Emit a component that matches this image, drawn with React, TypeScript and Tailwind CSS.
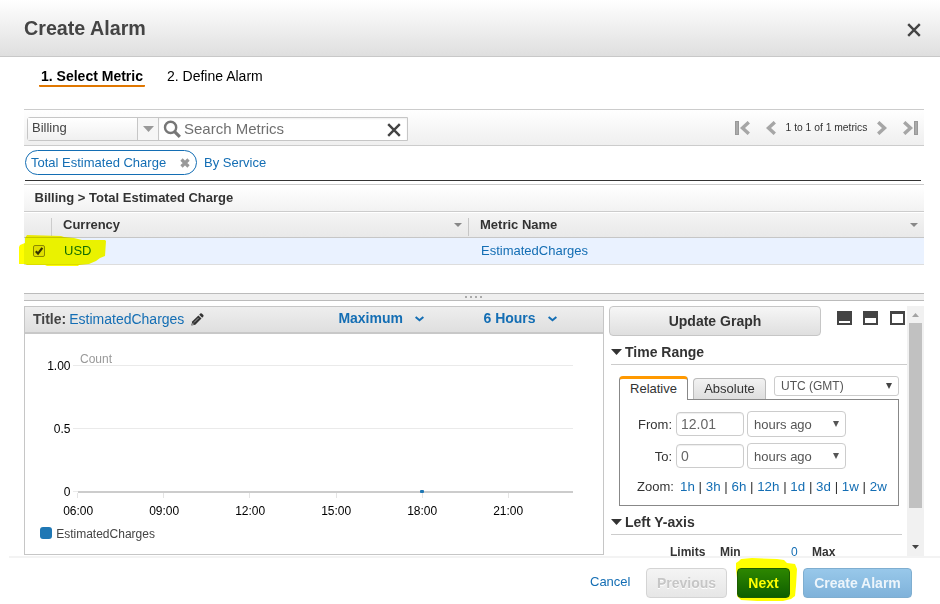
import React from 'react';

function Caret({ w = 10, h = 6, fill = '#888' }: { w?: number; h?: number; fill?: string }) {
  return (
    <svg width={w} height={h} viewBox="0 0 10 6" preserveAspectRatio="none" className="block shrink-0">
      <path d="M0 0H10L5 6Z" fill={fill} />
    </svg>
  );
}

function Cross({ size = 14 }: { size?: number }) {
  return (
    <svg width={size} height={size} viewBox="0 0 14 14" className="block shrink-0">
      <path d="M1.2 1.2L12.8 12.8M12.8 1.2L1.2 12.8" stroke="#444" strokeWidth="2.4" />
    </svg>
  );
}

function Pager({ bar, flip }: { bar?: boolean; flip?: boolean }) {
  return (
    <svg
      width={bar ? 15 : 10}
      height="14"
      viewBox={bar ? '0 0 15 14' : '5 0 10 14'}
      className={flip ? 'block -scale-x-100' : 'block'}
    >
      {bar && <rect x="0.5" y="0.5" width="3" height="13" fill="#aaa" stroke="#999" />}
      <path d="M13.8 1.2L7.5 7L13.8 12.8" fill="none" stroke="#a6a6a6" strokeWidth="3.4" />
    </svg>
  );
}

function Chevron() {
  return (
    <svg width="9" height="6" viewBox="0 0 9 6" className="mb-[2px] block">
      <path d="M0.6 1L4.5 4.3L8.4 1" fill="none" stroke="#146eb4" strokeWidth="2" />
    </svg>
  );
}

function Pencil() {
  return (
    <svg width="13" height="13" viewBox="0 0 13 13" className="block">
      <path d="M0.3 12.6L1.2 8.6L7.4 2.4L10.5 5.5L4.3 11.7Z" fill="#333" />
      <path d="M8.2 1.7L9.3 0.6Q10 0 10.8 0.6L12.3 2.1Q13 2.9 12.3 3.6L11.2 4.7Z" fill="#333" />
      <path d="M3 9.5L7.6 4.9" stroke="#bbb" strokeWidth="0.8" />
      <rect x="1" y="10.6" width="1.6" height="1" fill="#ddd" />
    </svg>
  );
}

function Chart() {
  const ticks = ['06:00', '09:00', '12:00', '15:00', '18:00', '21:00'];
  return (
    <svg width="578" height="220" viewBox="25 334 578 220" className="block text-[12px]">
      <path d="M73 365.5H573M73 428.5H573M73 491.5H78" stroke="#eaeaea" />
      <text x="70.5" y="370" textAnchor="end">1.00</text>
      <text x="70.5" y="433" textAnchor="end">0.5</text>
      <text x="70.5" y="496" textAnchor="end">0</text>
      <text x="80" y="363" fill="#999">Count</text>
      {ticks.map((t, i) => (
        <g key={t}>
          <path d={`M${77.5 + Math.round(i * 86.2)} 493V498`} stroke="#e4e4e4" />
          <text x={78.2 + i * 86} y="515" textAnchor="middle">{t}</text>
        </g>
      ))}
      <rect x="78" y="491" width="495" height="2" fill="#ccc" />
      <rect x="420" y="490" width="4" height="3" rx="1" fill="#1f77b4" />
      <rect x="40" y="527" width="12" height="12" rx="3" fill="#1f77b4" />
      <text x="56.2" y="538" fill="#444">EstimatedCharges</text>
    </svg>
  );
}

function Section({ title, width }: { title: string; width: string }) {
  return (
    <div className={`ml-[2px] flex h-[25px] items-center border-b border-[#ccc] text-[14px] font-bold ${width}`}>
      <Caret w={11} h={6} fill="#333" />
      <span className="ml-[3px]">{title}</span>
    </div>
  );
}

function RangeRow({ label, value }: { label: string; value: string }) {
  return (
    <div className="flex h-[26px] items-center">
      <span className="mt-px w-[52px] text-right">{label}</span>
      <div className="ml-[4px] flex h-[24px] w-[68px] items-center rounded-[4px] border border-[#ccc] pl-[4px] text-[14px] text-[#666] shadow-[inset_0_1px_1px_#eee]">
        {value}
      </div>
      <div className="ml-[3px] flex h-[26px] w-[99px] items-center justify-between rounded-[4px] border border-[#ccc] pr-[6px] pl-[6px] text-[#555]">
        <span className="mt-px">hours ago</span>
        <Caret w={6} h={6} fill="#555" />
      </div>
    </div>
  );
}

function Side() {
  const zooms = ['1h', '3h', '6h', '12h', '1d', '3d', '1w', '2w'];
  return (
    <div className="ml-[5px] flex h-[250px] w-[315px] overflow-hidden">
      <div className="w-[298px] shrink-0 text-[13px]">
        <div className="flex h-[33px]">
          <div className="flex h-[30px] w-[212px] items-center justify-center rounded-[4px] border border-[#c6c6c6] bg-linear-to-b from-[#f6f6f6] to-[#dfdfdf] text-[14px] font-bold">
            Update Graph
          </div>
          <svg width="69" height="14" viewBox="0 0 69 14" className="mt-[5px] ml-[16px] block">
            <rect width="15" height="14" fill="#444" />
            <rect x="2" y="10" width="11" height="2" fill="#fff" />
            <rect x="26" width="15" height="14" fill="#444" />
            <rect x="28" y="7" width="11" height="5" fill="#fff" />
            <rect x="53" width="15" height="14" fill="#444" />
            <rect x="55" y="3" width="11" height="9" fill="#fff" />
          </svg>
        </div>
        <div className="pt-px">
          <Section title="Time Range" width="w-[296px]" />
        </div>
        <div className="mt-[11px] ml-[10px] flex h-[23px] items-end">
          <div className="z-10 -mb-px flex h-[24px] w-[69px] items-center justify-center rounded-t-[4px] border-x border-t-[3px] border-x-[#888] border-t-[#f90] bg-white pb-[2px]">
            Relative
          </div>
          <div className="ml-[5px] flex h-[21px] w-[73px] items-center justify-center rounded-t-[4px] border border-b-0 border-[#bbb] bg-linear-to-b from-[#f2f2f2] to-[#dedede]">
            Absolute
          </div>
          <div className="ml-[8px] flex h-[20px] w-[125px] items-center justify-between self-start rounded-[3px] border border-[#ccc] pr-[6px] pl-[6px] text-[12px] text-[#555]">
            <span>UTC (GMT)</span>
            <Caret w={6} h={6} fill="#444" />
          </div>
        </div>
        <div className="ml-[10px] h-[107px] w-[280px] border border-[#888] pt-[11px]">
          <RangeRow label="From:" value="12.01" />
          <div className="h-[6px]" />
          <RangeRow label="To:" value="0" />
          <div className="mt-[9px] flex h-[17px] items-center whitespace-pre">
            <span className="ml-[17px] w-[43px]">Zoom:</span>
            <span className="text-[13.35px]">
              {zooms.map((z, i) => (
                <React.Fragment key={z}>
                  {i > 0 && ' | '}
                  <span className="text-[#146eb4]">{z}</span>
                </React.Fragment>
              ))}
            </span>
          </div>
        </div>
        <div className="pt-[4px]">
          <Section title="Left Y-axis" width="w-[291px]" />
        </div>
        <div className="mt-[9px] ml-[61px] flex h-[16px] items-center text-[12px] font-bold">
          <span className="w-[50px]">Limits</span>
          <span className="w-[71px]">Min</span>
          <span className="w-[21px] font-normal text-[#146eb4]">0</span>
          <span>Max</span>
        </div>
      </div>
      <div className="flex w-[17px] flex-col items-center bg-[#f1f1f1]">
        <div className="flex h-[17px] w-full items-center justify-center pr-[1px]">
          <svg width="7" height="4" viewBox="0 0 7 4"><path d="M0 4L3.5 0L7 4Z" fill="#a3a3a3" /></svg>
        </div>
        <div className="h-[185px] w-[13px] bg-[#c1c1c1]" />
        <div className="mt-[37px] mr-[1px]"><Caret w={7} h={4} fill="#444" /></div>
      </div>
    </div>
  );
}

export default function App() {
  return (
    <div className="relative flex h-[604px] w-[940px] flex-col overflow-hidden bg-white font-['Liberation_Sans',Arial,sans-serif] text-[13px] text-[#333]">
      <header className="flex h-[57px] items-center justify-between border-b border-[#c8c8c8] bg-linear-to-b from-white to-[#dfdfdf] pr-[19px] pl-[24px]">
        <h1 className="mt-[2px] text-[19.7px] font-bold text-[#444]">Create Alarm</h1>
        <div className="mt-[3px]"><Cross /></div>
      </header>

      <nav className="flex h-[52px] items-start pt-[11px] pl-[39px] text-[14px] leading-[17px] text-black">
        <div className="h-[19px] w-[106px] rounded-b-[1px] border-b-2 border-[#e07700] text-center font-bold">1. Select Metric</div>
        <div className="ml-[22px]">2. Define Alarm</div>
      </nav>

      <div className="mr-[16px] ml-[24px] flex h-[37px] w-[900px] items-center border-y border-[#ccc] bg-linear-to-b from-white to-[#efefef]">
        <div className="mt-[2px] ml-[3px] flex h-[24px] rounded-l-[3px] border border-[#c6c6c6]">
          <div className="w-[109px] bg-linear-to-b from-white to-[#f0f0f0] pl-[4px] leading-[20px] text-[#444]">Billing</div>
          <div className="flex w-[22px] items-center justify-center border-x border-[#c6c6c6] bg-[#f6f6f6]">
            <Caret w={11} h={6} fill="#999" />
          </div>
          <div className="flex w-[248px] items-center bg-white pr-[6px] pl-[4px] text-[15px] text-[#707070] shadow-[inset_0_1px_2px_#eee]">
            <svg width="19" height="19" viewBox="0 0 19 19" className="mt-px block">
              <circle cx="7.6" cy="7.4" r="5.6" fill="none" stroke="#777" strokeWidth="2.4" />
              <path d="M11.6 11.6L16.8 16.8" stroke="#777" strokeWidth="3.2" />
            </svg>
            <span className="mt-[2px] ml-[2px] grow">Search Metrics</span>
            <div className="mt-[3px]"><Cross /></div>
          </div>
        </div>
        <div className="ml-auto flex items-center pr-[6px]">
          <Pager bar />
          <span className="ml-[16px]"><Pager /></span>
          <span className="mt-px w-[101px] text-center text-[10.3px]">1 to 1 of 1 metrics</span>
          <Pager flip />
          <span className="ml-[16px]"><Pager bar flip /></span>
        </div>
      </div>

      <div className="ml-[25px] flex h-[35px] w-[896px] items-start border-b border-[#333] pt-[4px] text-[#146eb4]">
        <div className="flex h-[25px] w-[172px] items-center rounded-full border border-[#146eb4] pl-[5px]">
          Total Estimated Charge
          <svg width="10" height="10" viewBox="0 0 10 10" className="ml-[14px] block">
            <path d="M1.5 1.5L8.5 8.5M8.5 1.5L1.5 8.5" stroke="#999" strokeWidth="3.2" />
          </svg>
        </div>
        <span className="ml-[7px] leading-[25px]">By Service</span>
      </div>

      <div className="mt-[3px] ml-[24px] w-[900px] font-bold">
        <div className="flex h-[28px] items-center border-y border-[#ccc] bg-linear-to-b from-white to-[#f2f2f2] pl-[10.5px]">
          Billing &gt; Total Estimated Charge
        </div>
        <div className="mt-px flex h-[25px] items-center border-b border-[#c6c6c6] bg-linear-to-b from-[#f4f4f4] to-[#e9e9e9]">
          <div className="mt-[3px] h-[18px] w-[28px] border-r border-[#ccc]" />
          <div className="flex h-full w-[416px] items-center justify-between pr-[6px] pl-[11px]">
            Currency
            <Caret w={8} h={4} />
          </div>
          <div className="mt-[3px] h-[18px] w-px bg-[#c6c6c6]" />
          <div className="flex h-full grow items-center justify-between pr-[6px] pl-[11px]">
            Metric Name
            <Caret w={8} h={4} />
          </div>
        </div>
        <div className="flex h-[27px] items-center border-b border-[#ddd] bg-[#eaf2ff] font-normal text-[#146eb4]">
          <svg width="12" height="12" viewBox="0 0 12 12" className="ml-[9px] block">
            <rect x="0.5" y="0.5" width="11" height="11" rx="1.5" fill="#e0e0e0" stroke="#8a8a8a" />
            <path d="M2.8 6.3L5 8.6L9.3 2.8" fill="none" stroke="#333" strokeWidth="2.2" />
          </svg>
          <span className="ml-[19px] w-[417px]">USD</span>
          <span>EstimatedCharges</span>
        </div>
      </div>

      <div className="mt-[28px] ml-[24px] flex h-[8px] w-[900px] items-center justify-center gap-[3px] border-y border-[#bbb] bg-[#efefef] pr-[2px]">
        {[0, 1, 2, 3].map((i) => (
          <span key={i} className="mb-px h-[2px] w-[2px] bg-[#aaa]" />
        ))}
      </div>

      <main className="mt-[5px] ml-[24px] flex h-[250px] w-[900px]">
        <div className="h-[249px] w-[580px] shrink-0 border border-[#c6c6c6]">
          <div className="flex h-[27px] items-center border-b-2 border-[#c8c8c8] bg-linear-to-b from-[#eee] to-[#dfdfdf] pl-[8px] text-[14px] text-[#146eb4]">
            <span className="font-bold text-[#444]">Title:</span>
            <span className="ml-[3px]">EstimatedCharges</span>
            <span className="ml-[6.5px] w-[147.5px]"><Pencil /></span>
            <span className="mb-[2px] font-bold">Maximum</span>
            <span className="ml-[12px] w-[68.5px]"><Chevron /></span>
            <span className="mb-[2px] font-bold">6 Hours</span>
            <span className="ml-[12px]"><Chevron /></span>
          </div>
          <Chart />
        </div>
        <Side />
      </main>

      <footer className="ml-[9px] flex h-[48px] items-start border-t-2 border-[#f3f3f3] pt-[10px] text-[14px] font-bold">
        <a className="ml-[581px] w-[56px] text-[13px] leading-[27px] font-normal text-[#146eb4]">Cancel</a>
        <div className="flex h-[30px] w-[81px] items-center justify-center rounded-[4px] border border-[#d4d4d4] bg-linear-to-b from-[#f4f4f4] to-[#e6e6e6] text-[#c6c6c6] [text-shadow:0_1px_0_#fff]">Previous</div>
        <div className="relative ml-[10px] h-[30px] w-[53px]">
          <svg width="62" height="44" viewBox="735 558 62 44" className="absolute -top-[10px] -left-[2px]">
            <path d="M736 563L739 561L741 559L752 558L777 559L784 560L787 563L795 564L797 569L796 586L795 596L791 599L783 601L757 601L741 600L737 596L737 578L736 569Z" fill="#ff0" />
          </svg>
          <div className="relative flex h-full items-center justify-center rounded-[4px] border border-[#1d5c00] bg-linear-to-b from-[#2d8700] to-[#0d5f00] text-[#ff0]">Next</div>
        </div>
        <div className="ml-[13px] flex h-[30px] w-[109px] items-center justify-center rounded-[4px] border border-[#7faed0] bg-linear-to-b from-[#98c8ea] to-[#7fb2da] text-[#edf5fb]">Create Alarm</div>
      </footer>

      <svg width="88" height="32" viewBox="19 235 88 32" className="absolute top-[235px] left-[19px] mix-blend-multiply">
        <path d="M27 235L61 236L64 237L74 238L82 240L105 240L106 241L105 256L100 258L96 261L89 264L79 265L78 266L47 266L45 265L27 265L25 264L19 264L19 247L20 245L25 243L25 238Z" fill="#ff0" />
      </svg>
    </div>
  );
}
